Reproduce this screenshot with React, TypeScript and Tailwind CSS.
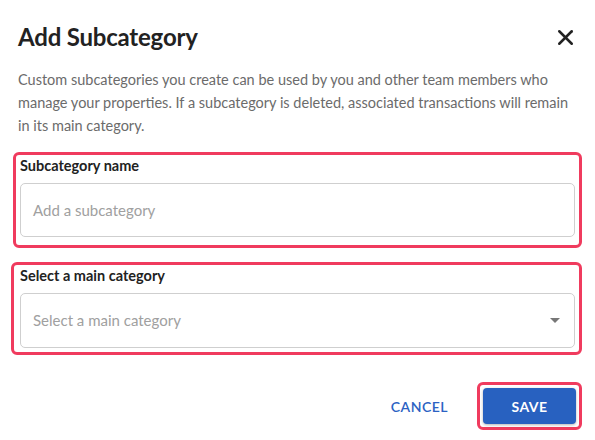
import { X } from "lucide-react";

const font = { fontFamily: '"Lato", "Liberation Sans", sans-serif' };

export default function App() {
  return (
    <div className="w-[595px] h-[440px] bg-white text-[#222] relative overflow-hidden" style={font}>
      {/* Header */}
      <div className="flex items-center justify-between pl-[18px] pr-[17px] pt-[20px] h-[54px]">
        <h1 className="text-[24px] font-bold leading-[30px] tracking-[-0.2px] text-[#222]">Add Subcategory</h1>
        <button aria-label="Close" className="text-[#222]">
          <X size={25} strokeWidth={2.4} />
        </button>
      </div>

      {/* Description */}
      <p className="px-[18px] mt-[14px] text-[14.5px] leading-[23px] text-[#6b6b6b]">
        Custom subcategories you create can be used by you and other team members who manage your
        properties. If a subcategory is deleted, associated transactions will remain in its main category.
      </p>

      {/* Subcategory name */}
      <div className="ml-[13px] w-[569px] mt-[15px] border-[3px] border-[#f03b5e] rounded-[6px] pl-[4px] pr-[4px] pt-[1px] pb-[8px]">
        <label className="block text-[14.5px] font-bold leading-[20px] text-[#222]">Subcategory name</label>
        <div className="mt-[7px] h-[54px] border border-[#cfcfcf] rounded-[5px] flex items-center px-[12px]">
          <span className="text-[15px] text-[#a0a0a0]">Add a subcategory</span>
        </div>
      </div>

      {/* Main category */}
      <div className="ml-[11px] w-[571px] mt-[14px] border-[3px] border-[#f03b5e] rounded-[6px] pl-[6px] pr-[4px] pt-[1px] pb-[4px]">
        <label className="block text-[14.5px] font-bold leading-[20px] text-[#222]">Select a main category</label>
        <div className="mt-[7px] h-[55px] border border-[#cfcfcf] rounded-[5px] flex items-center justify-between pl-[12px] pr-[14px]">
          <span className="text-[15px] text-[#a0a0a0]">Select a main category</span>
          <svg width="10" height="5" viewBox="0 0 10 5" className="fill-[#777]">
            <path d="M0 0h10L5 5z" />
          </svg>
        </div>
      </div>

      {/* Footer */}
      <div className="flex items-center justify-end mt-[27px] pr-[13px] gap-[29px]">
        <button className="text-[14px] font-semibold tracking-[0.5px] text-[#2b62c3]">CANCEL</button>
        <div className="border-[3px] border-[#f03b5e] rounded-[6px] p-[3px]">
          <button className="w-[93px] h-[36px] rounded-[4px] bg-[#2861c0] text-white text-[14px] font-bold tracking-[0.4px] shadow-[0_1px_3px_rgba(0,0,0,0.3)]">
            SAVE
          </button>
        </div>
      </div>
    </div>
  );
}
